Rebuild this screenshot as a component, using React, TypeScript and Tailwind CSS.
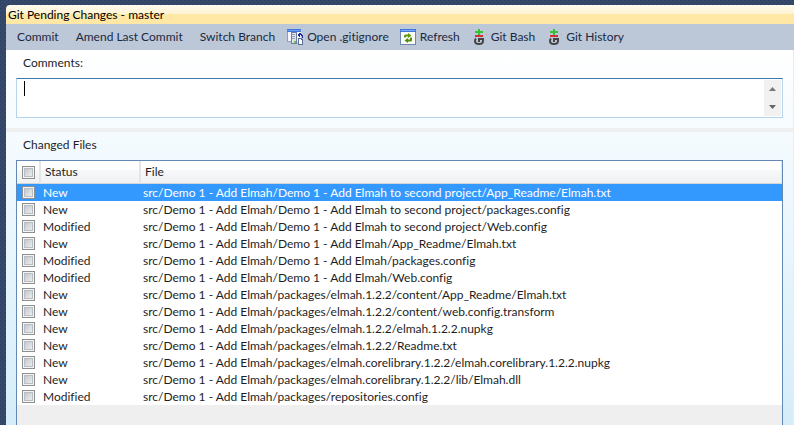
import React from "react";

const files: [string, string][] = [
  ["New", "src/Demo 1 - Add Elmah/Demo 1 - Add Elmah to second project/App_Readme/Elmah.txt"],
  ["New", "src/Demo 1 - Add Elmah/Demo 1 - Add Elmah to second project/packages.config"],
  ["Modified", "src/Demo 1 - Add Elmah/Demo 1 - Add Elmah to second project/Web.config"],
  ["New", "src/Demo 1 - Add Elmah/Demo 1 - Add Elmah/App_Readme/Elmah.txt"],
  ["Modified", "src/Demo 1 - Add Elmah/Demo 1 - Add Elmah/packages.config"],
  ["Modified", "src/Demo 1 - Add Elmah/Demo 1 - Add Elmah/Web.config"],
  ["New", "src/Demo 1 - Add Elmah/packages/elmah.1.2.2/content/App_Readme/Elmah.txt"],
  ["New", "src/Demo 1 - Add Elmah/packages/elmah.1.2.2/content/web.config.transform"],
  ["New", "src/Demo 1 - Add Elmah/packages/elmah.1.2.2/elmah.1.2.2.nupkg"],
  ["New", "src/Demo 1 - Add Elmah/packages/elmah.1.2.2/Readme.txt"],
  ["New", "src/Demo 1 - Add Elmah/packages/elmah.corelibrary.1.2.2/elmah.corelibrary.1.2.2.nupkg"],
  ["New", "src/Demo 1 - Add Elmah/packages/elmah.corelibrary.1.2.2/lib/Elmah.dll"],
  ["Modified", "src/Demo 1 - Add Elmah/packages/repositories.config"],
];

function OpenIcon() {
  return (
    <svg width="16" height="16" viewBox="0 0 16 16" aria-hidden="true" shapeRendering="crispEdges">
      <path d="M0 0h14v3H0z" fill="#3f74d8" />
      <path d="M0 1h14v1H0z" fill="#6c9cf0" />
      <path d="M0 3h14v10H0z" fill="#f4f6fb" />
      <path d="M0 3h1v10H0zM0 12h5v1H0z" fill="#8ea0c4" />
      <path d="M4 3h6v12H4z" fill="#71809c" />
      <path d="M5 4h4v10H5z" fill="#dfe4ec" />
      <path d="M5 5h3v1H5zM5 7h3v1H5zM5 9h3v1H5z" fill="#9aa6ba" />
      <path d="M7 12h2v2H7z" fill="#6fc04a" />
      <path d="M12 4h2v1h1v1h1v3h-1V7h-1V6h-1v2h-1V7h-1V5h1z" fill="#1b2d94" />
      <path d="M11 9h4v1h1v6h-5z" fill="#5c6f96" />
      <path d="M12 10h2v1h1v4h-3z" fill="#fff" />
    </svg>
  );
}

function RefreshIcon() {
  return (
    <svg width="16" height="16" viewBox="0 0 16 16" aria-hidden="true">
      <path d="M0 0h16v16H0z" fill="#6f86b0" />
      <path d="M0 0h16v3H0z" fill="#3f74d8" />
      <path d="M1 1h14v1H1z" fill="#7ba9f6" />
      <path d="M1 3h14v12H1z" fill="#fafbf4" />
      <path d="M4 8.500V7q0-1.500 1.500-1.500H8V4l3.500 2.500L8 9V7.500H6v1z" fill="#5a9a10" />
      <path d="M12 8.500V11q0 1.500-1.500 1.500H8V14l-3.500-2.500L8 9v1.500h2v-2z" fill="#4f8f08" />
    </svg>
  );
}

function GitIcon() {
  return (
    <svg width="16" height="16" viewBox="0 0 16 16" aria-hidden="true">
      <path d="M7 0h2v2h3v2H9v2H7V4H4V2h3z" fill="#33c433" />
      <path d="M4 6h8v2H4z" fill="#cf3030" />
      <path d="M5 9.500Q4 10.500 4 12q0 3 4 3t4-3v-2H8v3" fill="none" stroke="#444" strokeWidth="2" />
      <path d="M15 5h1v1h-1z" fill="#e3a46f" />
    </svg>
  );
}

const tick =
  "block h-[13px] w-[13px] appearance-none border border-[#8e8f8f] bg-linear-to-br from-[#b9bfc8] to-[#f6f6f6] shadow-[inset_0_0_0_1px_#f4f4f4,inset_0_0_0_2px_#b9bec5]";

function ToolButton({ icon, children }: { icon?: React.ReactNode; children: React.ReactNode }) {
  return (
    <button type="button" className="flex items-center gap-1 whitespace-nowrap text-[#1b293e]">
      {icon}
      {children}
    </button>
  );
}

export default function App() {
  return (
    <div className="flex min-h-screen flex-col bg-[#35496a] bg-[conic-gradient(at_1px_1px,transparent_75%,#293a5e_0),conic-gradient(at_1px_1px,transparent_75%,#293a5e_0)] bg-size-[4px_4px] bg-position-[0_0,2px_2px] pt-[5px] pl-[6px] font-[Lato,'Open_Sans',sans-serif] text-xs leading-4 text-[#1e1e1e] [font-variant-ligatures:none]">
      <h1 className="h-[19px] rounded-tl-sm bg-[linear-gradient(#fffbf0,#fff3cf_50%,#ffe8a6_50%)] pt-px pl-[2px] leading-[18px] text-black">
        Git Pending Changes - master
      </h1>
      <div role="toolbar" className="flex h-[26px] items-center bg-[#bcc7d8] pl-[11px]">
        <div className="flex items-center gap-[17px]">
          <ToolButton>Commit</ToolButton>
          <ToolButton>Amend Last Commit</ToolButton>
          <ToolButton>Switch Branch</ToolButton>
        </div>
        <div className="flex items-center gap-[11px] pl-[12px]">
          <ToolButton icon={<OpenIcon />}>Open .gitignore</ToolButton>
          <ToolButton icon={<RefreshIcon />}>Refresh</ToolButton>
          <ToolButton icon={<GitIcon />}>Git Bash</ToolButton>
          <ToolButton icon={<GitIcon />}>Git History</ToolButton>
        </div>
      </div>

      <main className="flex flex-1 flex-col border-r border-[#ececec] bg-[#efefef]">
        <section className="bg-linear-to-b from-white to-[#f5fbff] px-[10px] pt-[5px] pb-[10px]">
          <label htmlFor="comments" className="block pb-[7px] pl-[7px]">
            Comments:
          </label>
          <div className="relative flex h-10 border border-[#b5d5ea] border-t-[#3d7bad] bg-white p-px">
            <textarea id="comments" className="min-w-0 flex-1 resize-none overflow-hidden pl-[7px] outline-none" />
            <span className="absolute top-[2px] left-[7px] h-[15px] w-px bg-black" />
            <div className="flex w-[17px] flex-col items-center justify-between bg-[#f1f1f1] py-[7px]">
              <button type="button" aria-label="Scroll up">
                <svg width="7" height="4" viewBox="0 0 7 4" className="block">
                  <path d="M0 4 3.500 0 7 4z" fill="#777" />
                </svg>
              </button>
              <button type="button" aria-label="Scroll down">
                <svg width="7" height="4" viewBox="0 0 7 4" className="block">
                  <path d="M0 0h7L3.500 4z" fill="#666" />
                </svg>
              </button>
            </div>
          </div>
        </section>

        <section className="mt-1 flex flex-1 flex-col bg-linear-to-b from-[#f5fbff] to-[#d5edf9] px-[10px] pt-[5px]">
          <h2 className="pb-[7px] pl-[7px]">Changed Files</h2>
          <div className="flex-1 border border-b-0 border-[#6288b5] bg-[#efefef]">
            <table className="w-full table-fixed border-separate border-spacing-0 bg-white">
              <thead>
                <tr className="h-[23px] bg-[linear-gradient(#fff_40%,#f7f8fa_40%,#f0f1f3)] text-left">
                  <th className="w-[24px] border-r-2 border-b border-r-[#e4e5e7] border-b-[#d5d5d5] p-0 pl-[5px]">
                    <input type="checkbox" aria-label="Select all files" className={tick} />
                  </th>
                  <th className="w-[100px] border-r-2 border-b border-r-[#e4e5e7] border-b-[#d5d5d5] p-0 pl-1 font-normal">
                    Status
                  </th>
                  <th className="border-r border-b border-r-[#e4e5e7] border-b-[#d5d5d5] p-0 pl-1 font-normal">File</th>
                </tr>
              </thead>
              <tbody>
                {files.map(([status, path], i) => (
                  <tr key={path} className={i === 0 ? "h-[17px] bg-[#3399ff] text-white" : "h-[17px]"}>
                    <td className="p-0 pl-[5px]">
                      <input type="checkbox" aria-label={path} className={tick} />
                    </td>
                    <td className="p-0 pl-[2px]">{status}</td>
                    <td className="truncate p-0 pl-[2px]">{path}</td>
                  </tr>
                ))}
              </tbody>
            </table>
          </div>
        </section>
      </main>
    </div>
  );
}
